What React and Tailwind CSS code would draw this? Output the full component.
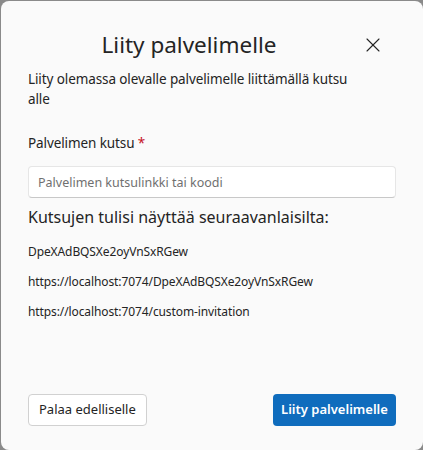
import { X } from "lucide-react";

const examples = [
  "DpeXAdBQSXe2oyVnSxRGew",
  "https://localhost:7074/DpeXAdBQSXe2oyVnSxRGew",
  "https://localhost:7074/custom-invitation",
];

const App = () => {
  return (
    <div
      className="w-[423px] h-[450px] bg-[#8a8a8a] pl-px pt-px"
      style={{ fontFamily: '"Noto Sans", "Open Sans", sans-serif' }}
    >
      <div className="w-[422px] h-[449px] bg-[#fafafa] rounded-[8px] flex flex-col px-[27px] text-[#242424]">
        <div className="flex items-center pt-[26px] h-[62px]">
          <h2 className="flex-1 text-center text-[22.5px] leading-[32px] font-normal">
            Liity palvelimelle
          </h2>
          <button className="w-[46px] flex justify-center text-[#242424]">
            <X size={24} strokeWidth={1.1} />
          </button>
        </div>
        <p className="mt-[6px] text-[13.5px] tracking-[-0.1px] leading-[20px] max-w-[325px]">
          Liity olemassa olevalle palvelimelle liittämällä kutsu alle
        </p>
        <label className="mt-[24px] text-[13.5px] tracking-[-0.1px] leading-[20px]">
          Palvelimen kutsu <span className="text-[#c50f1f]">*</span>
        </label>
        <input
          className="mt-[13px] h-[32px] w-full bg-white border border-[#e6e6e6] border-b-[#c8c8c8] rounded-[4px] px-[9px] text-[12.5px] outline-none placeholder:text-[#707070]"
          placeholder="Palvelimen kutsulinkki tai koodi"
        />
        <div className="mt-[8px] text-[16px] leading-[22px]">
          Kutsujen tulisi näyttää seuraavanlaisilta:
        </div>
        <div className="mt-[9px] flex flex-col">
          {examples.map((e) => (
            <div key={e} className="text-[12px] tracking-[-0.1px] leading-[30px]">
              {e}
            </div>
          ))}
        </div>
        <div className="mt-auto mb-[24px] flex justify-between">
          <button className="h-[32px] px-[10px] bg-white border border-[#d1d1d1] rounded-[4px] text-[13px]">
            Palaa edelliselle
          </button>
          <button className="h-[32px] w-[123px] bg-[#0f6cbd] rounded-[4px] text-[13px] font-semibold text-white">
            Liity palvelimelle
          </button>
        </div>
      </div>
    </div>
  );
};

export default App;
